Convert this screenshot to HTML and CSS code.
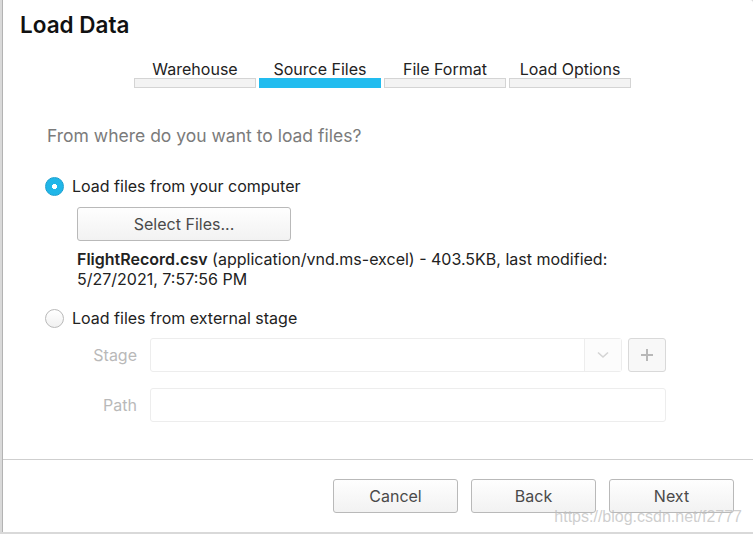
FILE: index.html
```html
<!DOCTYPE html>
<html lang="en">
<head>
<meta charset="utf-8">
<title>Load Data</title>
<link rel="stylesheet" href="styles.css">
</head>
<body>
<div class="dialog">
  <div class="dialog-body">
    <h1 class="title">Load Data</h1>
    <div class="steps">
      <div class="step"><span class="step-label">Warehouse</span><span class="step-bar"></span></div>
      <div class="step active"><span class="step-label">Source Files</span><span class="step-bar"></span></div>
      <div class="step"><span class="step-label">File Format</span><span class="step-bar"></span></div>
      <div class="step"><span class="step-label">Load Options</span><span class="step-bar"></span></div>
    </div>
    <div class="content">
      <p class="question">From where do you want to load files?</p>
      <div class="radio-row">
        <span class="radio checked"></span>
        <span class="radio-label">Load files from your computer</span>
      </div>
      <div class="local">
        <button class="btn select-btn">Select Files...</button>
        <p class="file-info"><b>FlightRecord.csv</b> (application/vnd.ms-excel) - 403.5KB, last modified: 5/27/2021, 7:57:56 PM</p>
      </div>
      <div class="radio-row second">
        <span class="radio"></span>
        <span class="radio-label">Load files from external stage</span>
      </div>
      <div class="stage-grid">
        <span class="field-label">Stage</span>
        <div class="stage-field">
          <div class="select">
            <span class="select-value"></span>
            <span class="select-arrow">
              <svg width="12" height="8" viewBox="0 0 12 8"><path d="M1 1.5 L6 6 L11 1.5" fill="none" stroke="#d4d4d4" stroke-width="1.6"/></svg>
            </span>
          </div>
          <span class="plus-btn">
            <svg width="14" height="14" viewBox="0 0 14 14"><path d="M7 1 V13 M1 7 H13" stroke="#b8b8b8" stroke-width="2"/></svg>
          </span>
        </div>
        <span class="field-label">Path</span>
        <div class="input"></div>
      </div>
    </div>
  </div>
  <div class="footer">
    <button class="btn">Cancel</button>
    <button class="btn">Back</button>
    <button class="btn">Next</button>
  </div>
  <span class="watermark">https://blog.csdn.net/f2777</span>
</div>
</body>
</html>
```
FILE: styles.css
```css
* { box-sizing: border-box; }
html, body { margin: 0; padding: 0; }
body {
  background: #d9d9d9;
  font-family: Inter, "Noto Sans", sans-serif;
  width: 753px;
  height: 534px;
  overflow: hidden;
}
.dialog {
  position: relative;
  margin-left: 2px;
  width: 751px;
  height: 532px;
  background: #fff;
  border-left: 1px solid #b3b3b3;
  border-top-right-radius: 3px;
  display: flex;
  flex-direction: column;
}
.dialog-body { flex: 1; }
.title {
  margin: 0;
  padding: 12px 0 0 17px;
  font-size: 22.5px;
  line-height: 26px;
  font-weight: 600;
  color: #111;
}
.steps {
  margin: 22px 0 0 131px;
  display: grid;
  grid-template-columns: repeat(4, 122px);
  column-gap: 3px;
}
.step { display: flex; flex-direction: column; align-items: center; }
.step-label {
  font-size: 16px;
  line-height: 18px;
  color: #222;
}
.step-bar {
  align-self: stretch;
  height: 10px;
  background: #f3f3f3;
  border: 1px solid #d4d4d4;
}
.step.active .step-bar { background: #22bcef; border-color: #22bcef; }
.content { padding-left: 42px; }
.question {
  margin: 38px 0 0 2px;
  font-size: 17.5px;
  line-height: 20px;
  color: #7b7b7b;
}
.radio-row {
  margin-top: 30px;
  display: flex;
  align-items: center;
  gap: 8px;
  height: 20px;
}
.radio-row.second { margin-top: 19px; }
.radio {
  width: 19px;
  height: 19px;
  border-radius: 50%;
  border: 1px solid #b9b9b9;
  background: linear-gradient(#fff, #f1f1f1);
  flex: none;
}
.radio.checked {
  border-color: #1a9fcf;
  background: radial-gradient(circle, #fff 0 2.3px, #20b6e8 2.8px);
}
.radio-label {
  font-size: 16px;
  line-height: 20px;
  color: #222;
}
.local { padding-left: 32px; }
.btn {
  font-family: Inter, "Noto Sans", sans-serif;
  font-size: 16px;
  color: #4a4a4a;
  height: 34px;
  border: 1px solid #b9b9b9;
  border-radius: 3px;
  background: linear-gradient(#fefefe, #f2f2f2);
  padding: 0;
}
.select-btn { margin-top: 11px; width: 214px; display: block; }
.file-info {
  margin: 8px 0 0;
  width: 580px;
  font-size: 16px;
  line-height: 20px;
  color: #222;
}
.file-info b { font-weight: 600; }
.stage-grid {
  margin-top: 10px;
  width: 621px;
  display: grid;
  grid-template-columns: 92px 1fr;
  column-gap: 13px;
  row-gap: 16px;
  align-items: center;
}
.field-label {
  text-align: right;
  font-size: 16px;
  color: #b9b9b9;
}
.stage-field { display: flex; gap: 6px; }
.select {
  flex: 1;
  height: 34px;
  border: 1px solid #ededed;
  border-radius: 3px;
  display: flex;
}
.select-value { flex: 1; }
.select-arrow {
  width: 37px;
  border-left: 1px solid #ededed;
  background: #fcfcfc;
  display: flex;
  align-items: center;
  justify-content: center;
}
.plus-btn {
  width: 38px;
  height: 34px;
  border: 1px solid #d9d9d9;
  border-radius: 3px;
  background: #f8f8f8;
  display: flex;
  align-items: center;
  justify-content: center;
}
.input {
  height: 34px;
  border: 1px solid #ededed;
  border-radius: 3px;
}
.footer {
  height: 73px;
  border-top: 1px solid #cfcfcf;
  display: flex;
  justify-content: flex-end;
  align-items: center;
  gap: 13px;
  padding-right: 19px;
}
.footer .btn { width: 125px; }
.watermark {
  position: absolute;
  right: 11px;
  bottom: 6px;
  font-family: "Liberation Sans", Arial, sans-serif;
  font-size: 16px;
  color: rgba(190, 190, 190, 0.75);
  pointer-events: none;
}
```
